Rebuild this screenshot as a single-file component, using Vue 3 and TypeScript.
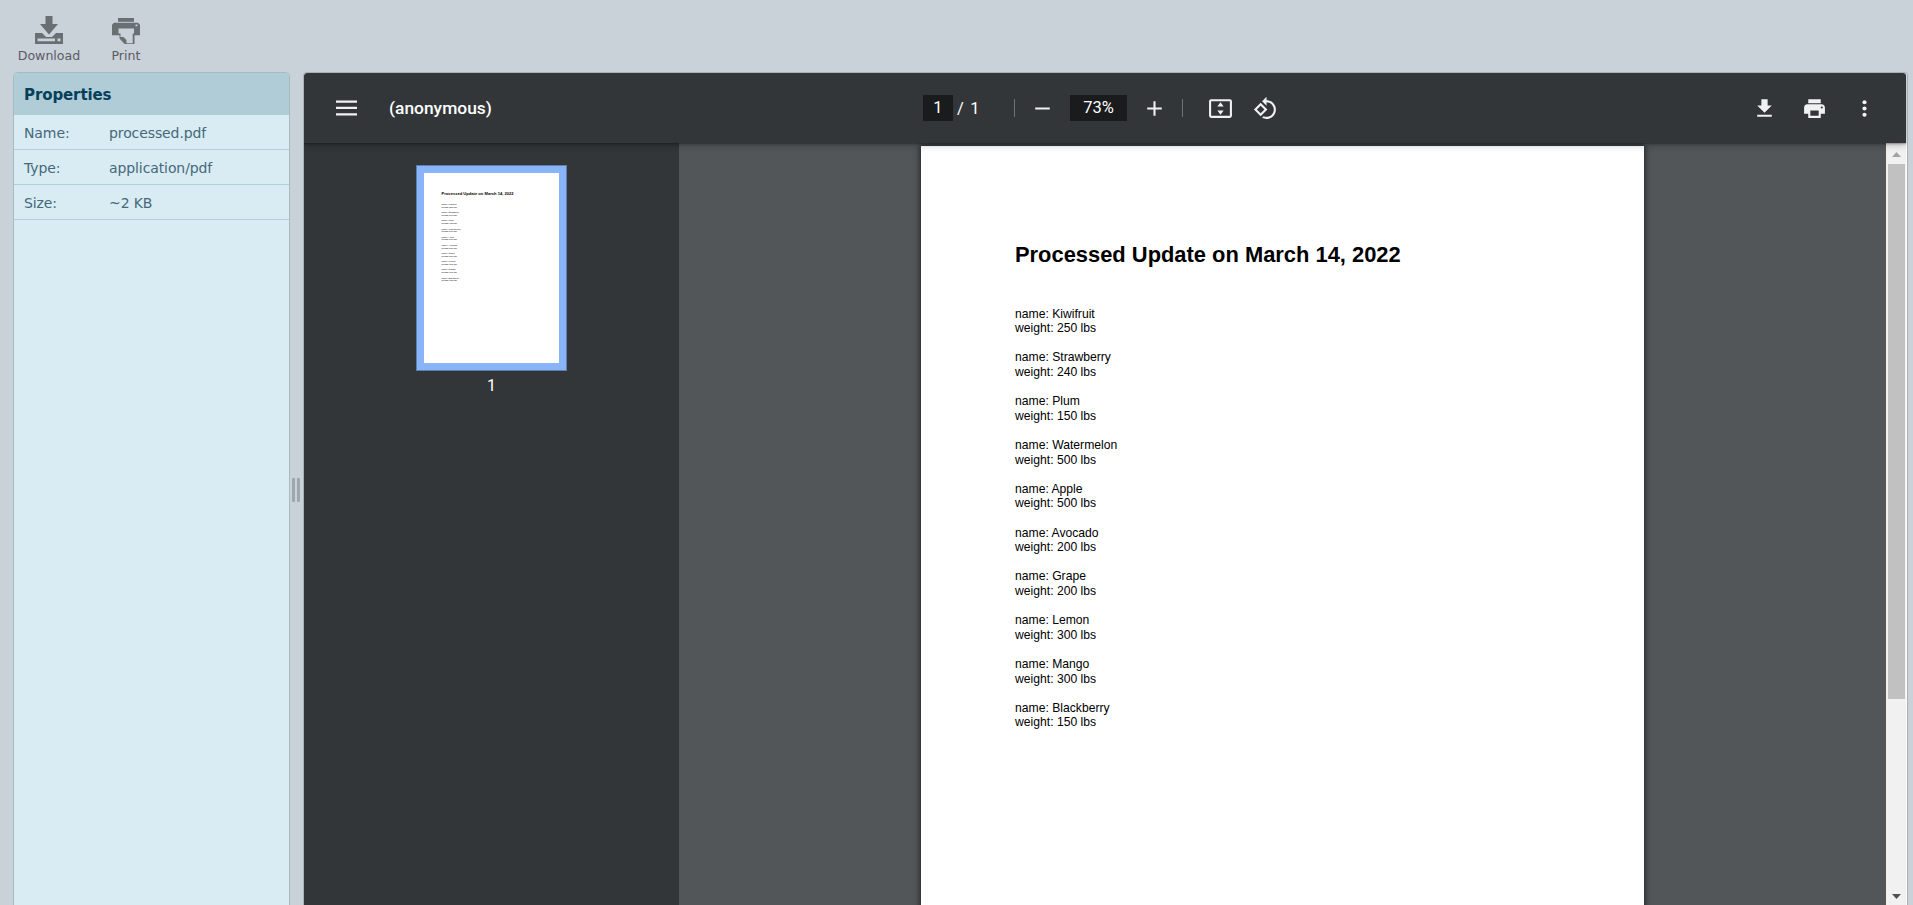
<script setup lang="ts">
interface Property { label: string; value: string }
interface Item { name: string; weight: number }

const properties: Property[] = [
  { label: 'Name:', value: 'processed.pdf' },
  { label: 'Type:', value: 'application/pdf' },
  { label: 'Size:', value: '~2 KB' },
]

const items: Item[] = [
  { name: 'Kiwifruit', weight: 250 },
  { name: 'Strawberry', weight: 240 },
  { name: 'Plum', weight: 150 },
  { name: 'Watermelon', weight: 500 },
  { name: 'Apple', weight: 500 },
  { name: 'Avocado', weight: 200 },
  { name: 'Grape', weight: 200 },
  { name: 'Lemon', weight: 300 },
  { name: 'Mango', weight: 300 },
  { name: 'Blackberry', weight: 150 },
]
</script>

<template>
  <div class="app">
    <header class="actions">
      <button class="action download">
        <svg width="28" height="28" viewBox="0 0 28 28">
          <path d="M10.500 0h7v8H23l-9 10.500L5 8h5.500z" />
          <path fill-rule="evenodd" d="M0 17h7l4 4h6l4-4h7v11H0zM2.500 22.500v2.700h17.500v-2.700zM22.500 22.500v2.700h3v-2.700z" />
        </svg>
        <span>Download</span>
      </button>
      <button class="action print">
        <svg width="28" height="28" viewBox="0 0 28 28">
          <path d="M6 2h16v3.800H6z" />
          <path fill-rule="evenodd" d="M2 6.800h24l2 2v10.500h-5.500v9.200H13l-5.500-6v-3.200H0V8.800zM6.500 12.500v5h2v3.500h3l3 3v3.200h6.200v-9.700h1.300v-5zM23.500 8.500v1.800h2V8.500z" />
        </svg>
        <span>Print</span>
      </button>
    </header>

    <main class="body">
      <aside class="properties">
        <h2>Properties</h2>
        <dl>
          <div v-for="p in properties" :key="p.label" class="property">
            <dt>{{ p.label }}</dt>
            <dd>{{ p.value }}</dd>
          </div>
        </dl>
      </aside>

      <div class="splitter"><i></i><i></i></div>

      <section class="viewer">
        <div class="toolbar">
          <div class="side start">
            <svg class="menu" width="21" height="16" viewBox="0 0 21 16"><path d="M0 .5h21v2.300H0zM0 6.800h21v2.300H0zM0 13.200h21v2.300H0z" /></svg>
            <span class="title">(anonymous)</span>
          </div>
          <div class="center">
            <span class="box page-no">1</span>
            <span class="slash">/</span>
            <span class="total">1</span>
            <i class="rule first"></i>
            <svg class="icon minus" viewBox="0 0 24 24"><path d="M5 11h14v2H5z" /></svg>
            <span class="box zoom">73%</span>
            <svg class="icon plus" viewBox="0 0 24 24"><path d="M19 13h-6v6h-2v-6H5v-2h6V5h2v6h6z" /></svg>
            <i class="rule second"></i>
            <svg class="icon fit" viewBox="0 0 24 24"><path fill-rule="evenodd" d="M3 3h18a2 2 0 0 1 2 2v14a2 2 0 0 1-2 2H3a2 2 0 0 1-2-2V5a2 2 0 0 1 2-2zm0 2v14h18V5zM12 6l3 4H9zM9 14h6l-3 4z" /></svg>
            <svg class="icon rotate" viewBox="0 0 24 24"><path d="M7.340 6.410L.86 12.900l6.490 6.480 6.490-6.480-6.500-6.490zM3.690 12.900l3.660-3.660L11 12.900l-3.660 3.660-3.650-3.660zm15.670-6.260C17.610 4.880 15.300 4 13 4V.76L8.760 5 13 9.240V6c1.790 0 3.580.68 4.950 2.050 2.730 2.730 2.730 7.170 0 9.900C16.580 19.320 14.790 20 13 20c-.97 0-1.940-.21-2.840-.61l-1.490 1.490C10.020 21.620 11.510 22 13 22c2.300 0 4.610-.88 6.360-2.640 3.520-3.510 3.520-9.210 0-12.720z" /></svg>
          </div>
          <div class="side end">
            <svg class="icon" viewBox="0 0 24 24"><path d="M19 9h-4V3H9v6H5l7 7zM5 18v2h14v-2z" /></svg>
            <svg class="icon" viewBox="0 0 24 24"><path d="M19 8H5c-1.660 0-3 1.340-3 3v6h4v4h12v-4h4v-6c0-1.660-1.340-3-3-3zm-3 11H8v-5h8zm3-7c-.55 0-1-.45-1-1s.45-1 1-1 1 .45 1 1-.45 1-1 1zM18 3H6v4h12z" /></svg>
            <svg class="icon" viewBox="0 0 24 24"><circle cx="12" cy="6" r="2" /><circle cx="12" cy="12" r="2" /><circle cx="12" cy="18" r="2" /></svg>
          </div>
        </div>

        <div class="content">
          <nav class="thumbs">
            <div class="thumb">
              <div class="page mini">
                <h1>Processed Update on March 14, 2022</h1>
                <p v-for="item in items" :key="item.name">name: {{ item.name }}<br />weight: {{ item.weight }} lbs</p>
              </div>
            </div>
            <span class="thumb-label">1</span>
          </nav>
          <div class="canvas">
            <article class="page sheet">
              <h1>Processed Update on March 14, 2022</h1>
              <p v-for="item in items" :key="item.name">name: {{ item.name }}<br />weight: {{ item.weight }} lbs</p>
            </article>
          </div>
          <div class="scrollbar">
            <svg class="arrow up" width="9" height="5" viewBox="0 0 9 5"><path d="M0 5L4.500 0 9 5z" /></svg>
            <div class="handle"></div>
            <svg class="arrow down" width="9" height="5" viewBox="0 0 9 5"><path d="M0 0h9L4.500 5z" /></svg>
          </div>
        </div>
      </section>
    </main>
  </div>
</template>

<style>
html, body { margin: 0; overflow: hidden; }
</style>

<style scoped>
* { box-sizing: border-box; }
.app {
  height: 905px;
  overflow: hidden;
  display: flex;
  flex-direction: column;
  background: #c9d1d9;
  font-family: Verdana, "DejaVu Sans", sans-serif;
}
.actions { height: 72px; flex: none; display: flex; padding-left: 11px; }
.action {
  border: 0;
  padding: 16px 0 0;
  background: none;
  display: flex;
  flex-direction: column;
  align-items: center;
  font: 12.600px/16px Verdana, "DejaVu Sans", sans-serif;
  color: #5b5b62;
}
.action svg { fill: #687074; flex: none; }
.action span { margin-top: 4px; white-space: nowrap; }
.download { width: 76px; }
.print { width: 78px; }

.body { flex: 1; min-height: 0; display: flex; padding: 0 5px 0 13px; }
.properties {
  width: 277px;
  flex: none;
  border: 1px solid #a9b8c1;
  border-bottom: 0;
  border-radius: 5px 5px 0 0;
  background: #d9ecf3;
  overflow: hidden;
  font-size: 14px;
  letter-spacing: -.1px;
  color: #45697a;
}
.properties h2 {
  margin: 0;
  height: 42px;
  padding-left: 10px;
  background: #b0ccd6;
  color: #04405a;
  font-size: 15px;
  line-height: 45px;
}
.properties dl { margin: 0; }
.property {
  height: 35px;
  padding-left: 10px;
  display: flex;
  border-bottom: 1px solid #b5ced8;
  line-height: 36px;
}
dt { width: 85px; }
dd { margin: 0; }

.splitter { width: 13px; flex: none; display: flex; align-items: flex-start; gap: 2px; padding: 406px 0 0 2px; }
.splitter i { width: 3px; height: 24px; background: #9ea6ae; border-radius: 1px; }

.viewer {
  flex: 1;
  min-width: 0;
  border: 1px solid #a9b0b7;
  border-bottom: 0;
  border-radius: 4px 4px 0 0;
  background: #fff;
  padding-right: 1px;
  overflow: hidden;
  display: flex;
  flex-direction: column;
  font-family: Roboto, sans-serif;
}
.toolbar {
  height: 70px;
  flex: none;
  position: relative;
  z-index: 1;
  display: flex;
  align-items: center;
  justify-content: space-between;
  background: #323639;
  color: #fff;
  fill: #f1f1f1;
  box-shadow: 0 -2px 8px rgba(0, 0, 0, .09), 0 4px 8px rgba(0, 0, 0, .06), 0 1px 2px rgba(0, 0, 0, .3), 0 2px 6px rgba(0, 0, 0, .15);
  border-radius: 3px 3px 0 0;
}
.side { display: flex; align-items: center; }
.start { width: 619px; padding-left: 32px; }
.menu { flex: none; }
.title { margin-left: 32px; font-size: 17.400px; font-weight: 500; }
.center { display: flex; align-items: center; flex: 1; font-size: 16.500px; }
.box { height: 26px; line-height: 25px; background: #191b1c; text-align: center; }
.page-no { width: 30px; }
.slash { width: 15px; text-align: center; }
.total { width: 14px; text-align: center; }
.rule { width: 1px; height: 18px; background: #6f7274; }
.first { margin-left: 32px; }
.icon { width: 25px; height: 25px; flex: none; }
.minus { margin-left: 15px; }
.zoom { width: 57px; margin-left: 15px; }
.plus { margin-left: 15px; }
.second { margin-left: 15px; }
.fit { margin-left: 25px; }
.rotate { margin-left: 20px; }
.end { gap: 25px; padding-right: 29px; }

.content { flex: 1; min-height: 0; display: flex; }
.thumbs { width: 375px; flex: none; background: #323639; display: flex; flex-direction: column; align-items: center; padding-top: 22px; }
.thumb { width: 151px; height: 206px; border: 8px solid #8ab4f8; outline: 1px solid #5e7fae; outline-offset: -1px; background: #fff; overflow: hidden; flex: none; }
.thumb-label { margin-top: 5px; font-size: 16px; line-height: 20px; color: #fff; }
.canvas { flex: 1; background: #525659; padding: 3px 0 0 242px; overflow: hidden; }
.page {
  width: 723px;
  height: 1023px;
  padding: 97px 0 0 94px;
  background: #fff;
  color: #000;
  font-family: "Liberation Sans", Arial, sans-serif;
  font-size: 12.170px;
  line-height: 14.600px;
}
.sheet { box-shadow: 0 0 6px 1px rgba(0, 0, 0, .6); }
.mini { transform: scale(.1867); transform-origin: 0 0; }
.page h1 { margin: 0 0 39.700px; font-size: 21.900px; line-height: 24px; white-space: nowrap; }
.page p { margin: 0 0 14.600px; }

.scrollbar { width: 20px; flex: none; background: #f1f1f1; display: flex; flex-direction: column; padding-left: 2px; }
.arrow { margin-left: 4px; flex: none; }
.up { margin-top: 9px; fill: #a3a3a3; }
.down { margin-top: 195px; fill: #505050; }
.handle { width: 17px; height: 535px; margin-top: 7px; flex: none; background: #c1c1c1; }
</style>
